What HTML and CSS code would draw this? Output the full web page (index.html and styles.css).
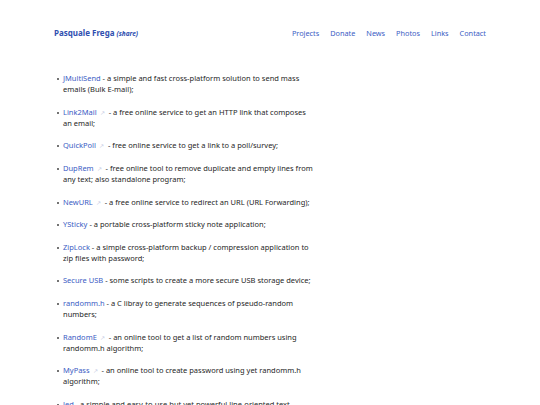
FILE: index.html
```html
<!DOCTYPE html>
<html>
<head>
<meta charset="utf-8">
<link rel="stylesheet" href="styles.css">
</head>
<body>
<div class="page">
  <header class="top">
    <div class="brand"><a class="name" href="#">Pasquale Frega</a> <a class="share" href="#">(share)</a></div>
    <nav class="nav">
      <a href="#">Projects</a>
      <a href="#">Donate</a>
      <a href="#">News</a>
      <a href="#">Photos</a>
      <a href="#">Links</a>
      <a href="#">Contact</a>
    </nav>
  </header>
  <ul class="list">
    <li><a href="#">JMultiSend</a> - a simple and fast cross-platform solution to send mass emails (Bulk E-mail);</li>
    <li><a href="#">Link2Mail</a><span class="ext">↗</span> - a free online service to get an HTTP link that composes an email;</li>
    <li><a href="#">QuickPoll</a><span class="ext">↗</span> - free online service to get a link to a poll/survey;</li>
    <li><a href="#">DupRem</a><span class="ext">↗</span> - free online tool to remove duplicate and empty lines from any text; also standalone program;</li>
    <li><a href="#">NewURL</a><span class="ext">↗</span> - a free online service to redirect an URL (URL Forwarding);</li>
    <li><a href="#">YSticky</a> - a portable cross-platform sticky note application;</li>
    <li><a href="#">ZipLock</a> - a simple cross-platform backup / compression application to zip files with password;</li>
    <li><a href="#">Secure USB</a> - some scripts to create a more secure USB storage device;</li>
    <li><a href="#">randomm.h</a> - a C libray to generate sequences of pseudo-random numbers;</li>
    <li><a href="#">RandomE</a><span class="ext">↗</span> - an online tool to get a list of random numbers using randomm.h algorithm;</li>
    <li><a href="#">MyPass</a><span class="ext">↗</span> - an online tool to create password using yet randomm.h algorithm;</li>
    <li><a href="#">led</a> - a simple and easy-to-use but yet powerful line-oriented text editor;</li>
  </ul>
</div>
</body>
</html>
```
FILE: styles.css
```css
html, body {
  margin: 0;
  padding: 0;
  background: #ffffff;
}
body {
  font-family: "Noto Sans", "Open Sans", sans-serif;
  color: #262626;
  font-size: 7.5px;
}
a {
  text-decoration: none;
  color: #3b5cc4;
}
.page {
  width: 432px;
  margin: 0 auto;
  padding-top: 27px;
}
.top {
  display: flex;
  justify-content: space-between;
  align-items: baseline;
  height: 14px;
}
.brand .name {
  font-weight: 700;
  color: #2f4fb0;
  font-size: 8px;
}
.brand .share {
  font-weight: 700;
  font-style: italic;
  font-size: 6.5px;
  color: #2f4fb0;
}
.nav {
  display: flex;
  gap: 11px;
}
.nav a {
  font-size: 7.3px;
  color: #3b5cc4;
}
.list {
  margin: 32px 0 0 0;
  padding: 0 0 0 9px;
  width: 251px;
  list-style: none;
}
.list li {
  position: relative;
  line-height: 11.2px;
  margin-bottom: 11.3px;
}
.list li::before {
  content: "";
  position: absolute;
  left: -6px;
  top: 5px;
  width: 2px;
  height: 2px;
  border-radius: 50%;
  background: #444;
}
.ext {
  color: #c2c9e2;
  font-size: 5.5px;
  line-height: 0;
  margin: 0 2px 0 3px;
}
```
